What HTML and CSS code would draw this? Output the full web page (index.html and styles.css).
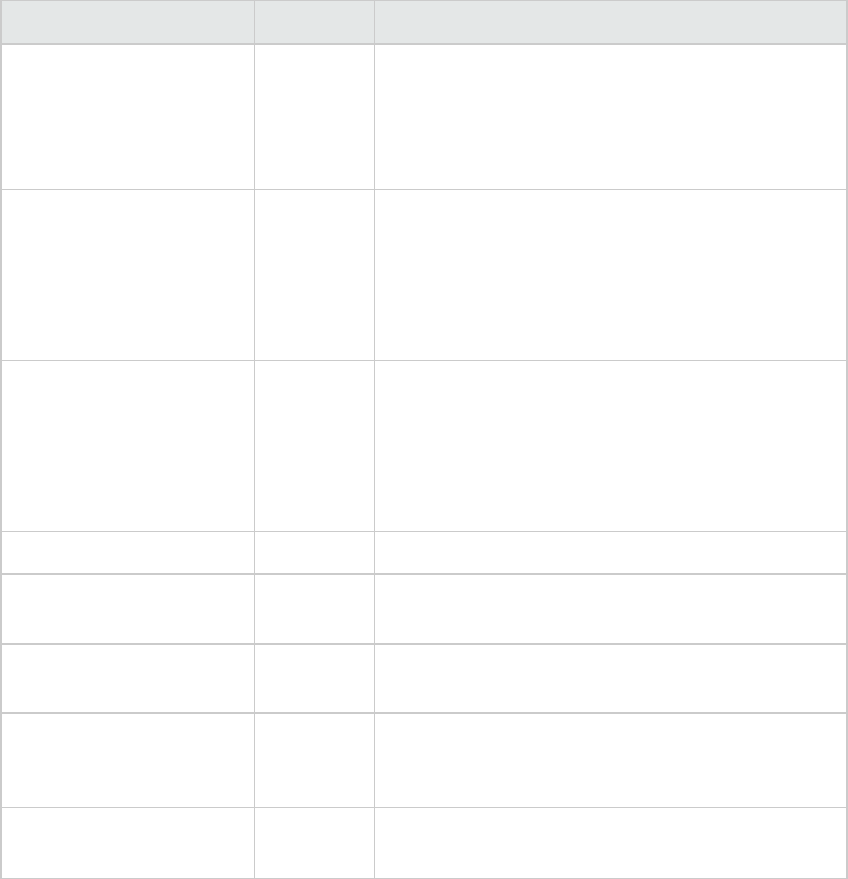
FILE: index.html
```html
<!DOCTYPE html>
<html lang="en">

<head>
    <meta charset="UTF-8">
    <title>Table</title>
    <link rel="stylesheet" href="styles.css">
</head>

<body>
    <table class="grid">
        <thead>
            <tr>
                <th class="col-name"></th>
                <th class="col-type"></th>
                <th class="col-desc"></th>
            </tr>
        </thead>
        <tbody>
            <tr class="h145"><td></td><td></td><td></td></tr>
            <tr class="h171"><td></td><td></td><td></td></tr>
            <tr class="h171"><td></td><td></td><td></td></tr>
            <tr class="h43 thick"><td></td><td></td><td></td></tr>
            <tr class="h70 thick"><td></td><td></td><td></td></tr>
            <tr class="h69 thick"><td></td><td></td><td></td></tr>
            <tr class="h94"><td></td><td></td><td></td></tr>
            <tr class="h71"><td></td><td></td><td></td></tr>
        </tbody>
    </table>
</body>

</html>
```

FILE: styles.css
```css
body {
    margin: 0;
    font-family: "Liberation Sans", Arial, sans-serif;
    background: #ffffff;
}

.grid {
    width: 848px;
    table-layout: fixed;
    border-collapse: separate;
    border-spacing: 0;
    border-top: 1px solid #cbcbcb;
    border-left: 2px solid #cbcbcb;
    border-right: 2px solid #cbcbcb;
    box-sizing: border-box;
}

.grid th,
.grid td {
    box-sizing: border-box;
    padding: 0;
    border-right: 1px solid #cbcbcb;
    border-bottom: 1px solid #cbcbcb;
}

.grid th:last-child,
.grid td:last-child {
    border-right: none;
}

.grid th {
    height: 44px;
    background: #e4e7e7;
    border-bottom: 2px solid #cbcbcb;
}

.col-name {
    width: 253px;
}

.col-type {
    width: 120px;
}

.grid tr.thick td {
    border-bottom-width: 2px;
}

.h145 td { height: 145px; }
.h171 td { height: 171px; }
.h43 td { height: 43px; }
.h70 td { height: 70px; }
.h69 td { height: 69px; }
.h94 td { height: 94px; }
.h71 td { height: 71px; }
```
